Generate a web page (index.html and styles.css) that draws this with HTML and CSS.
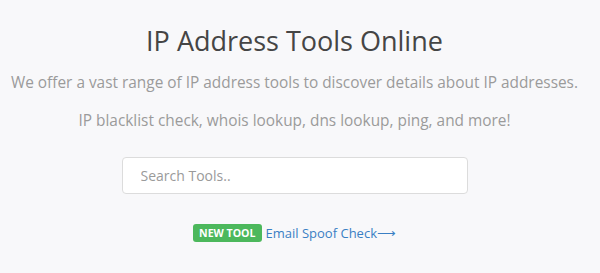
FILE: index.html
```html
<!DOCTYPE html>
<html lang="en">
<head>
<meta charset="UTF-8" />
<meta name="viewport" content="width=device-width, initial-scale=1.0" />
<title>IP Address Tools Online</title>
<link rel="stylesheet" href="styles.css">
</head>
<body>
<div class="hero">
    <h1 class="hero-title">IP Address Tools Online</h1>
    <p class="hero-lead">We offer a vast range of IP address tools to discover details about IP addresses.</p>
    <p class="hero-lead second">IP blacklist check, whois lookup, dns lookup, ping, and more!</p>

    <div class="search-wrap">
        <input class="search-input" type="text" placeholder="Search Tools..">
    </div>

    <div class="new-tool">
        <span class="badge">NEW TOOL</span>
        <a class="new-tool-link" href="#">Email Spoof Check&#10230;</a>
    </div>
</div>
</body>
</html>
```

FILE: styles.css
```css
* {
    box-sizing: border-box;
    margin: 0;
    padding: 0;
}
body {
    background: #f8f8fa;
    font-family: "Open Sans", sans-serif;
}
.hero {
    display: flex;
    flex-direction: column;
    align-items: center;
    padding: 22px 11px 0 0;
    text-align: center;
}
.hero-title {
    font-size: 27px;
    font-weight: 400;
    color: #454545;
    line-height: 38px;
    margin-bottom: 12px;
}
.hero-lead {
    font-size: 15.4px;
    color: #9b9b9b;
    line-height: 22px;
}
.hero-lead.second {
    margin-top: 16px;
}
.search-wrap {
    margin-top: 25px;
    width: 346px;
}
.search-input {
    display: block;
    width: 100%;
    height: 37px;
    padding: 0 18px;
    font-family: inherit;
    font-size: 14px;
    color: #555;
    background: #fff;
    border: 1px solid #dcdcdc;
    border-radius: 4px;
    outline: none;
}
.search-input::placeholder {
    color: #9a9a9a;
}
.new-tool {
    margin-top: 30px;
    display: flex;
    align-items: center;
    gap: 4px;
}
.badge {
    background: #4cb85c;
    color: #fff;
    font-size: 10.6px;
    font-weight: 700;
    line-height: 18px;
    padding: 0 6px;
    border-radius: 3px;
}
.new-tool-link {
    color: #3a7fc4;
    font-size: 13px;
    text-decoration: none;
}
```
